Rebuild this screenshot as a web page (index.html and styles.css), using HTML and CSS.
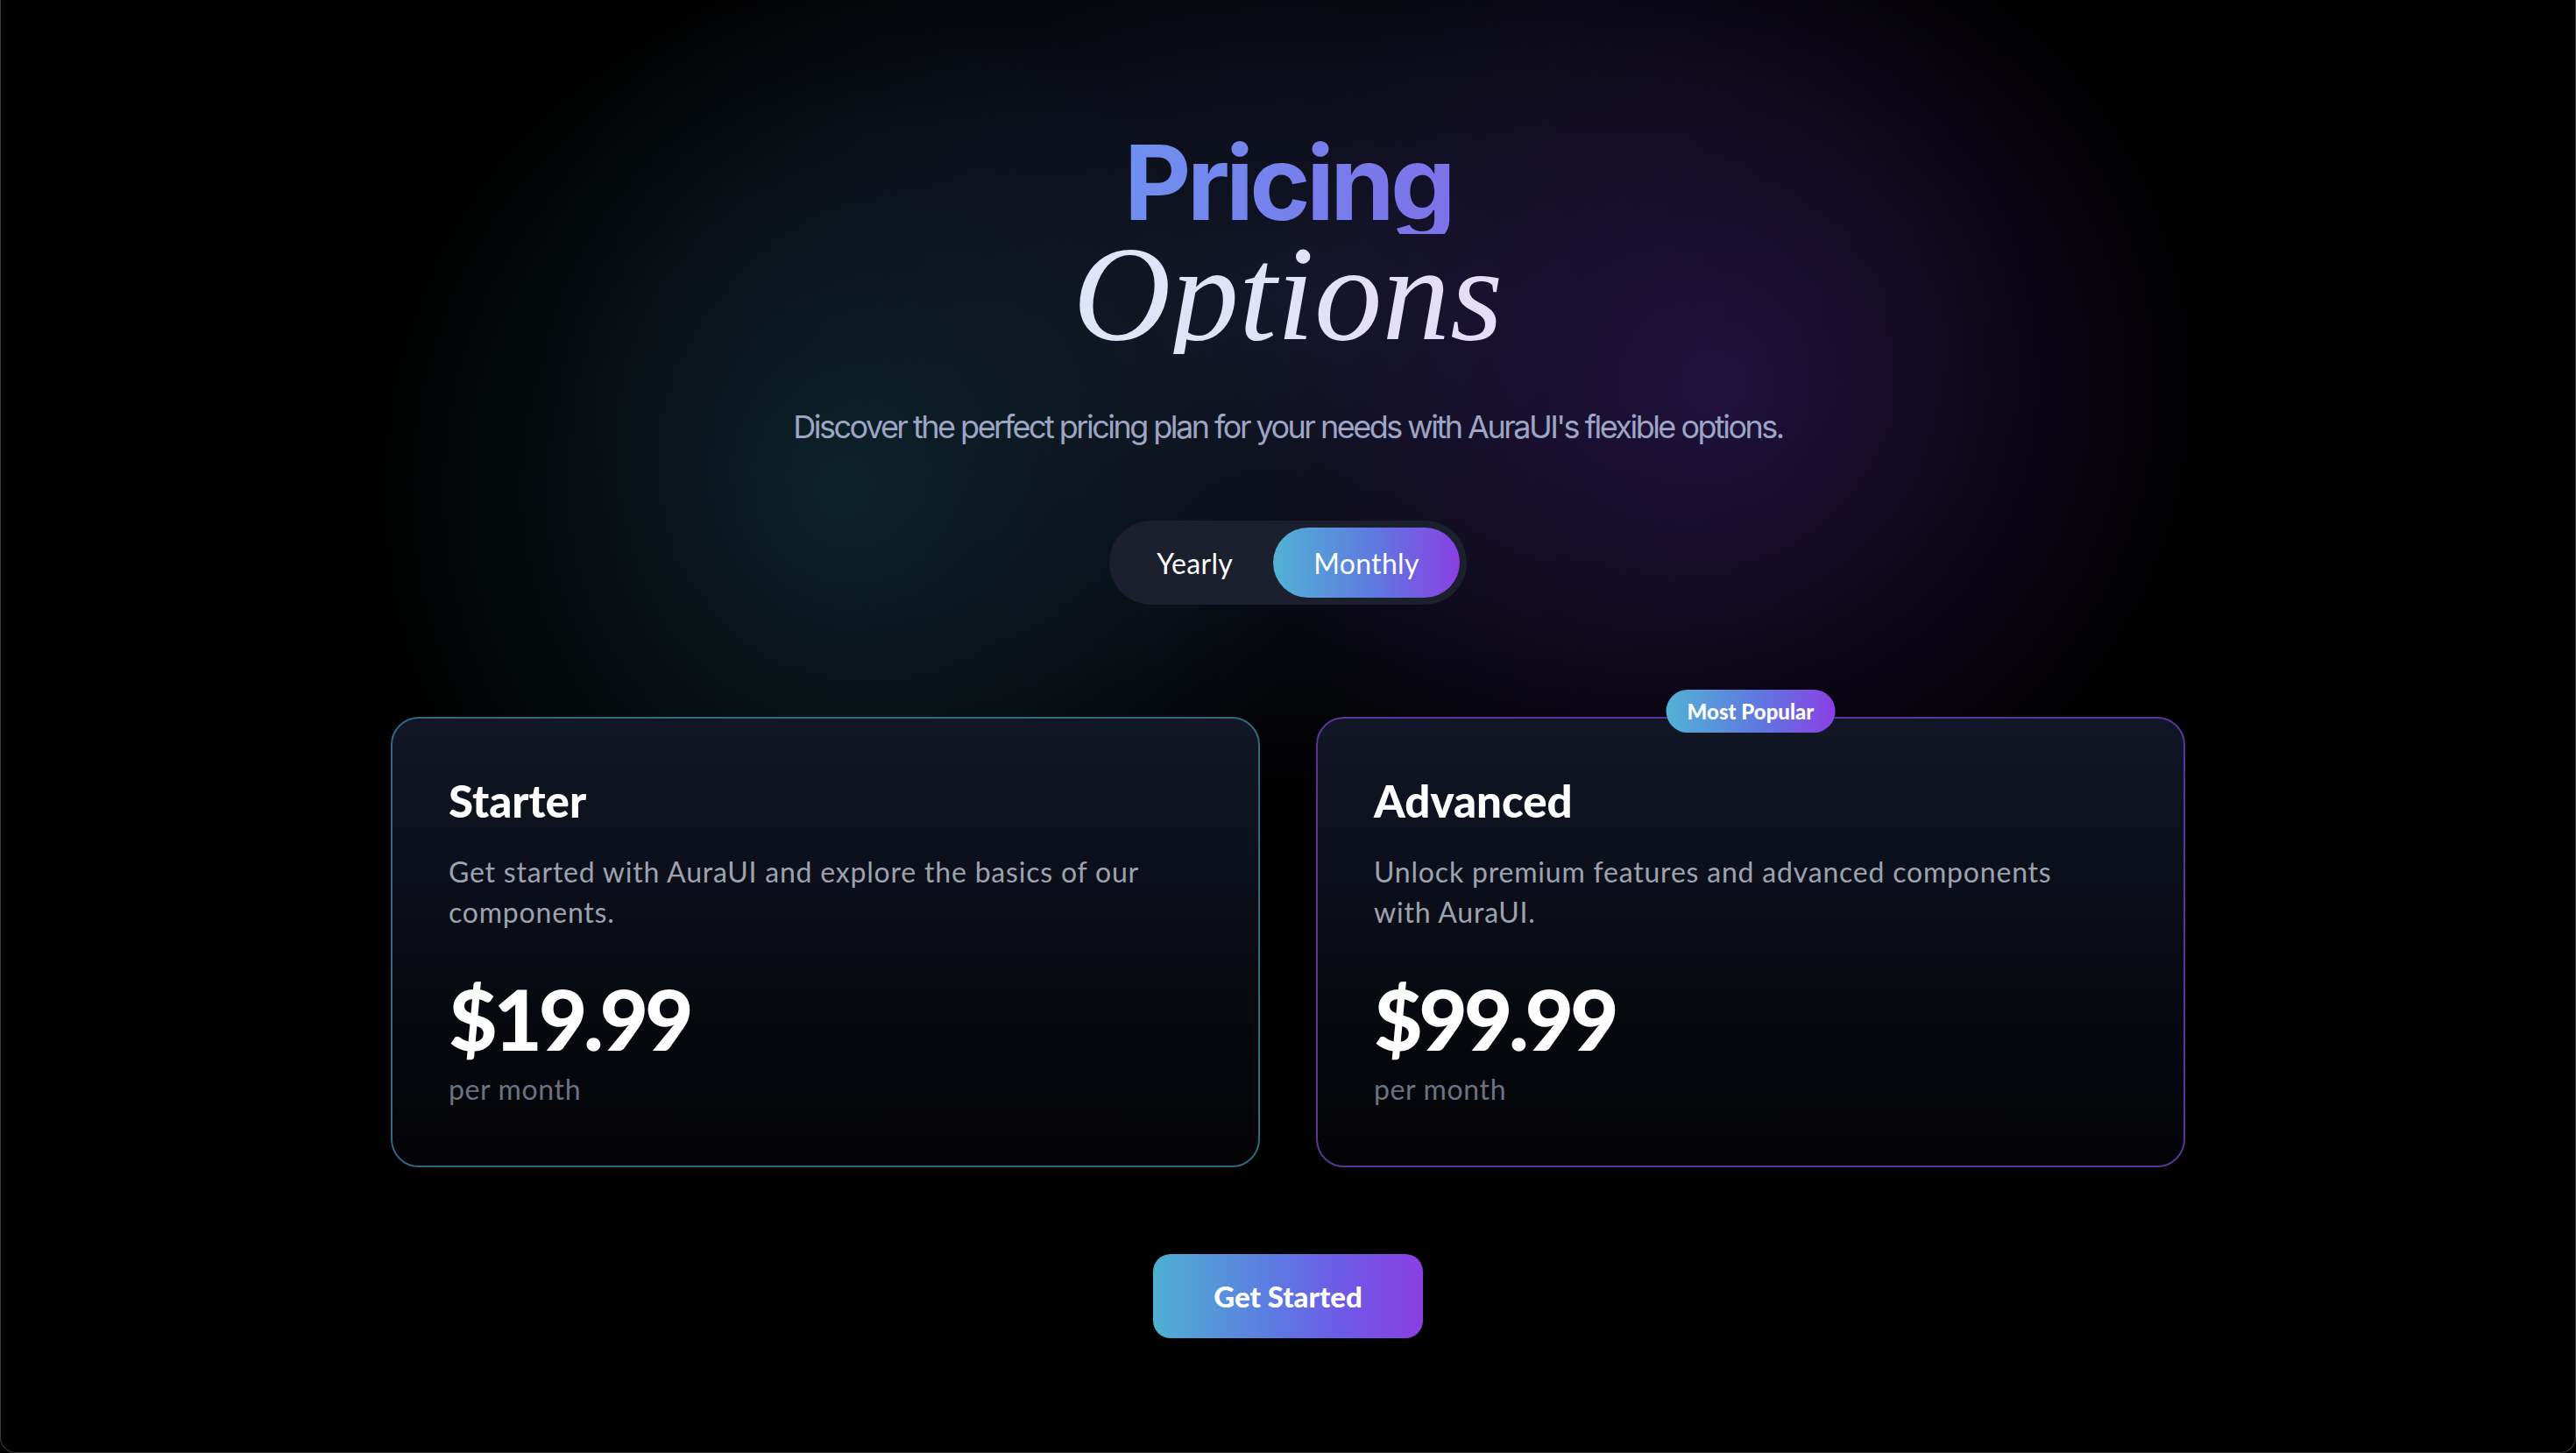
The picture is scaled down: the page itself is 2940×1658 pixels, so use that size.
FILE: index.html
```html
<!DOCTYPE html>
<html lang="en">
<head>
<meta charset="utf-8">
<title>Pricing Options</title>
<link rel="stylesheet" href="styles.css">
</head>
<body>
<div class="frame">
  <section class="pricing">
    <h1 class="heading">
      <span class="heading-top">Pricing</span>
      <span class="heading-bottom">Options</span>
    </h1>
    <p class="subtitle">Discover the perfect pricing plan for your needs with AuraUI's flexible options.</p>
    <div class="toggle">
      <button class="toggle-btn">Yearly</button>
      <button class="toggle-btn toggle-active">Monthly</button>
    </div>
    <div class="cards">
      <div class="card card-starter">
        <h2 class="card-title">Starter</h2>
        <p class="card-desc">Get started with AuraUI and explore the basics of our components.</p>
        <div class="card-price">$19.99</div>
        <div class="card-period">per month</div>
      </div>
      <div class="card card-advanced">
        <span class="badge">Most Popular</span>
        <h2 class="card-title">Advanced</h2>
        <p class="card-desc">Unlock premium features and advanced components with AuraUI.</p>
        <div class="card-price">$99.99</div>
        <div class="card-period">per month</div>
      </div>
    </div>
    <button class="cta">Get Started</button>
  </section>
</div>
</body>
</html>
```
FILE: styles.css
```css
html, body {
  margin: 0;
  padding: 0;
  background: #000;
}

.frame {
  box-sizing: border-box;
  min-height: 1658px;
  border-left: 1px solid #3a3a3a;
  border-right: 1px solid #3a3a3a;
  border-bottom: 1px solid #3a3a3a;
  border-radius: 0 0 18px 18px;
  background:
    radial-gradient(ellipse 540px 580px at 960px 560px, rgba(14, 38, 46, 0.85), rgba(14, 38, 46, 0) 100%),
    radial-gradient(ellipse 560px 560px at 1960px 440px, rgba(36, 18, 66, 0.85), rgba(36, 18, 66, 0) 100%),
    radial-gradient(ellipse 860px 580px at 1470px 340px, rgba(20, 24, 44, 0.95), rgba(20, 24, 44, 0) 100%),
    #000;
  overflow: hidden;
}

.pricing {
  display: flex;
  flex-direction: column;
  align-items: center;
  padding-top: 149px;
  padding-bottom: 100px;
}

.heading {
  margin: 0;
  display: flex;
  flex-direction: column;
  align-items: center;
  font-weight: normal;
}

.heading-top {
  font-family: "Inter", "Liberation Sans", sans-serif;
  font-weight: 700;
  font-size: 118px;
  line-height: 1;
  letter-spacing: -0.04em;
  background: linear-gradient(90deg, #6f8ff0, #7d72e8);
  -webkit-background-clip: text;
  background-clip: text;
  color: transparent;
}

.heading-bottom {
  font-family: "Liberation Serif", "DejaVu Serif", serif;
  font-style: italic;
  font-weight: 400;
  font-size: 155px;
  line-height: 137px;
  background: linear-gradient(90deg, #dde6f8, #e6ddf8);
  -webkit-background-clip: text;
  background-clip: text;
  color: transparent;
}

.subtitle {
  margin: 56px 0 0;
  font-family: "Inter", "Liberation Sans", sans-serif;
  font-weight: 400;
  font-size: 36px;
  line-height: 54px;
  letter-spacing: -0.07em;
  color: #9ea5c4;
}

.toggle {
  margin-top: 80px;
  display: flex;
  padding: 8px;
  border-radius: 999px;
  background: #1c1f2e;
}

.toggle-btn {
  height: 80px;
  padding: 0 46px;
  border: 0;
  border-radius: 999px;
  background: transparent;
  color: #fff;
  font-family: "Lato", "Noto Sans", sans-serif;
  font-weight: 400;
  font-size: 32px;
  letter-spacing: 0.01em;
}

.toggle-active {
  background: linear-gradient(90deg, #52b2d4, #5f78e0 55%, #8a3fe3);
}

.cards {
  margin-top: 128px;
  width: 2048px;
  display: grid;
  grid-template-columns: 1fr 1fr;
  gap: 64px;
}

.card {
  position: relative;
  box-sizing: border-box;
  padding: 64px;
  border-radius: 32px;
  background: linear-gradient(180deg, #111726 0%, #0a0d16 45%, #030306 100%);
}

.card-starter {
  border: 2px solid #2d6a80;
}

.card-advanced {
  border: 2px solid #5a3598;
}

.badge {
  position: absolute;
  top: -33px;
  left: 50%;
  transform: translateX(-50%);
  height: 49px;
  padding: 0 24px;
  display: flex;
  align-items: center;
  border-radius: 999px;
  background: linear-gradient(90deg, #52b2d4, #5f78e0 55%, #8a3fe3);
  color: #fff;
  font-family: "Lato", "Noto Sans", sans-serif;
  font-weight: 900;
  font-size: 24px;
  white-space: nowrap;
}

.card-title {
  margin: -2px 0 0;
  font-family: "Lato", "Noto Sans", sans-serif;
  font-weight: 900;
  font-size: 51px;
  line-height: 64px;
  color: #fff;
}

.card-desc {
  margin: 26px 0 0;
  max-width: 840px;
  font-family: "Lato", "Noto Sans", sans-serif;
  font-weight: 400;
  font-size: 32px;
  line-height: 46px;
  letter-spacing: 0.025em;
  color: #9ca3af;
}

.card-price {
  margin-top: 50px;
  font-family: "Lato", "Noto Sans", sans-serif;
  font-weight: 900;
  font-size: 96px;
  line-height: 1;
  letter-spacing: -0.045em;
  color: #fff;
}

.card-period {
  margin-top: 10px;
  font-family: "Lato", "Noto Sans", sans-serif;
  font-weight: 400;
  font-size: 32px;
  line-height: 46px;
  letter-spacing: 0.02em;
  color: #6b7280;
}

.cta {
  margin-top: 99px;
  height: 96px;
  padding: 0 69px;
  border: 0;
  border-radius: 20px;
  background: linear-gradient(90deg, #4fb0d2, #5d7ae2 45%, #6d5ae6 70%, #8a3fe3);
  color: #fff;
  font-family: "Lato", "Noto Sans", sans-serif;
  font-weight: 900;
  font-size: 33px;
}
```
